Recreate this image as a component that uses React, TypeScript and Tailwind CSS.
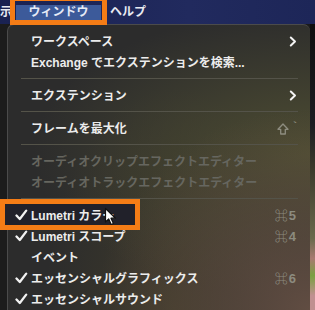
import React from 'react';

type Item =
  | { kind: 'sep' }
  | {
      kind: 'item';
      label: string;
      checked?: boolean;
      disabled?: boolean;
      submenu?: boolean;
      shortcut?: React.ReactNode;
      focus?: boolean;
    };

const Check: React.FC = () => (
  <svg width="13" height="12" viewBox="0 0 13 12" className="absolute left-[7px] top-[4px] z-10">
    <path d="M1.5 6.5 L4.8 10 L11.2 1.6" fill="none" stroke="#f2f2f2" strokeWidth="2.3" strokeLinecap="round" strokeLinejoin="round" />
  </svg>
);

const Chevron: React.FC = () => (
  <svg width="8" height="11" viewBox="0 0 8 11">
    <path d="M1.8 1.5 L6 5.5 L1.8 9.5" fill="none" stroke="#f4f4f4" strokeWidth="2" strokeLinecap="round" strokeLinejoin="round" />
  </svg>
);

const ShiftKey: React.FC = () => (
  <span className="flex items-center gap-[4px] text-[#8e8d80]">
    <svg width="12" height="12" viewBox="0 0 12 12">
      <path d="M6 1 L11 6.3 L8.3 6.3 L8.3 11 L3.7 11 L3.7 6.3 L1 6.3 Z" fill="none" stroke="#8e8d80" strokeWidth="1.3" strokeLinejoin="round" />
    </svg>
    <span className="text-[11px] leading-none -mt-[6px]">`</span>
  </span>
);

const Cmd: React.FC<{ n: string }> = ({ n }) => (
  <span className="text-[13px] text-[#8c8b7f] font-bold tracking-[1px]">⌘{n}</span>
);

const Cursor: React.FC = () => (
  <svg width="14" height="19" viewBox="0 0 14 19" className="absolute left-[96px] top-[2px] z-20">
    <path
      d="M1.5 1.5 L1.5 15 L4.7 12 L7.2 17.5 L9.4 16.5 L7 11.2 L11.5 11.2 Z"
      fill="#ffffff"
      stroke="#111111"
      strokeWidth="1.2"
      strokeLinejoin="round"
    />
  </svg>
);

const items: Item[] = [
  { kind: 'item', label: 'ワークスペース', submenu: true },
  { kind: 'item', label: 'Exchange でエクステンションを検索...' },
  { kind: 'sep' },
  { kind: 'item', label: 'エクステンション', submenu: true },
  { kind: 'sep' },
  { kind: 'item', label: 'フレームを最大化', shortcut: <ShiftKey /> },
  { kind: 'sep' },
  { kind: 'item', label: 'オーディオクリップエフェクトエディター', disabled: true },
  { kind: 'item', label: 'オーディオトラックエフェクトエディター', disabled: true },
  { kind: 'sep' },
  { kind: 'item', label: 'Lumetri カラー', checked: true, focus: true, shortcut: <Cmd n="5" /> },
  { kind: 'item', label: 'Lumetri スコープ', checked: true, shortcut: <Cmd n="4" /> },
  { kind: 'item', label: 'イベント' },
  { kind: 'item', label: 'エッセンシャルグラフィックス', checked: true, shortcut: <Cmd n="6" /> },
  { kind: 'item', label: 'エッセンシャルサウンド', checked: true },
];

const App: React.FC = () => {
  return (
    <div className="w-[315px] h-[310px] overflow-hidden relative bg-[#1b1b1b] font-['Liberation_Sans','Noto_Sans_CJK_JP',sans-serif] font-semibold">
      {/* top menu bar */}
      <div className="h-[24px] flex items-center bg-[linear-gradient(90deg,#1a2252,#212a5e_60%,#1d2658)] text-[12px] text-[#e9ebf2]">
        <span className="w-[12px] leading-none">示</span>
        <div className="relative ml-[4px]">
          <div className="w-[85px] h-[15px] bg-[#3c5a9a] flex items-center justify-center text-[#e6ebf6] leading-none">
            ウィンドウ
          </div>
        </div>
        <span className="ml-[9px] leading-none">ヘルプ</span>
      </div>
      <div className="absolute left-[10px] -top-[4px] w-[97px] h-[29px] border-[5px] border-[#f47c16] z-30" />

      {/* body */}
      <div className="flex h-[286px]">
        <div className="w-[7px] bg-[#1c1c1c]" />
        <div className="flex-1 relative rounded-t-[7px] border-t border-l border-[#4b4b4b] pt-[6px] bg-[#2c2c2c] bg-[image:radial-gradient(ellipse_at_100%_100%,#614d42_0%,transparent_50%),radial-gradient(ellipse_at_100%_45%,#4e4d32_0%,transparent_65%),radial-gradient(ellipse_at_55%_100%,#3e3a2a_0%,transparent_55%)]">
          {items.map((it, i) =>
            it.kind === 'sep' ? (
              <div key={i} className="h-[12px] pt-[5px] pl-[13px] pr-[12px]">
                <div className="h-px bg-[#545349]" />
              </div>
            ) : (
              <div key={i} className="relative h-[21px] flex items-center pl-[23px] pr-[13px] text-[12px]">
                {it.focus && (
                  <div className="absolute -left-[8px] -top-[6px] w-[140px] h-[31px] border-[5px] border-[#f47c16] bg-[#21212a] z-0" />
                )}
                {it.checked && <Check />}
                <span
                  className={
                    'relative z-10 flex-1 whitespace-nowrap leading-none ' +
                    (it.disabled ? 'text-[#66665f]' : 'text-[#ececec]')
                  }
                >
                  {it.label}
                </span>
                {it.submenu && <Chevron />}
                {it.shortcut}
                {it.focus && <Cursor />}
              </div>
            )
          )}
        </div>
        <div className="w-[5px] bg-[linear-gradient(180deg,#0f0f10_0%,#1d1d22_35%,#3a3a2c_50%,#6a6a4c_75%,#a87a70_82%,#7aa040_88%,#c09090_95%)]" />
      </div>
    </div>
  );
};

export default App;
